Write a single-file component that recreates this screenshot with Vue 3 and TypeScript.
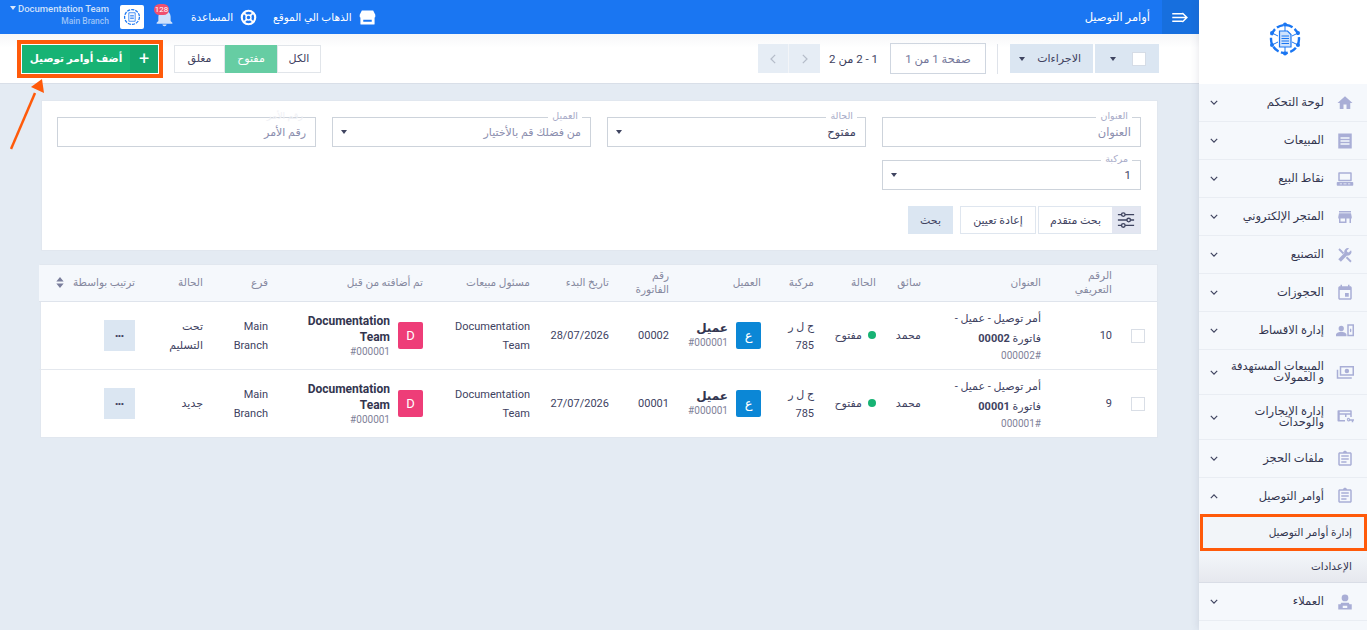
<script setup lang="ts">
interface MenuItem {
  label: string
  d: string
  s?: string
  tall?: boolean
  open?: boolean
}

const home = 'M10 20v-6h4v6h5v-8h3L12 3 2 12h3v8z'
const clip = 'M19 3h-4.2C14.4 1.8 13.3 1 12 1s-2.4.8-2.8 2H5c-1.1 0-2 .9-2 2v14c0 1.1.9 2 2 2h14c1.1 0 2-.9 2-2V5c0-1.1-.9-2-2-2zm0 16H5V5h14v14zM7 15h7v2H7zm0-4h10v2H7zm0-4h10v2H7z'

const menu: MenuItem[] = [
  { label: 'لوحة التحكم', d: home },
  { label: 'المبيعات', d: 'M3 2h18v20H3zM6 7v2h12V7zm0 4v2h12v-2zm0 4v2h12v-2z' },
  { label: 'نقاط البيع', d: 'M4 3h16c.6 0 1 .4 1 1v10c0 .6-.4 1-1 1H4c-.6 0-1-.4-1-1V4c0-.6.4-1 1-1zm1 2v8h14V5zM2 16h20c.6 0 1 .4 1 1v3c0 .6-.4 1-1 1H2c-.6 0-1-.4-1-1v-3c0-.6.4-1 1-1zm3 2v1h3v-1zm5 0v1h4v-1zm6 0v1h3v-1z' },
  { label: 'المتجر الإلكتروني', d: 'M20 4H4v2h16V4zm1 10v-2l-1-5H4l-1 5v2h1v6h10v-6h4v6h2v-6h1zm-9 4H6v-4h6v4z' },
  { label: 'التصنيع', d: 'M20 5.5l-3 3-2-.5-.5-2 3-3a5 5 0 0 0-6.300 6.300L3 17.500 6.500 21l8.200-8.200A5 5 0 0 0 20 5.500z', s: 'M4 4l4 4M7 7l3 3M14 15l6 6' },
  { label: 'الحجوزات', d: 'M17 12h-5v5h5v-5zM16 1v2H8V1H6v2H5c-1.100 0-2 .9-2 2v14c0 1.100.9 2 2 2h14c1.100 0 2-.9 2-2V5c0-1.100-.9-2-2-2h-1V1h-2zm3 18H5V8h14v11z' },
  { label: 'إدارة الاقساط', d: 'M7 5a3.500 3.500 0 1 1 0 7 3.500 3.500 0 0 1 0-7zM0 19v-2c0-2.500 4.500-4 7-4s7 1.500 7 4v2zM15 3h9v16h-9zm2 2v12h5V5zm2.500 3.500a1 2.500 0 1 1 0 5 1 2.500 0 0 1 0-5z' },
  { label: 'المبيعات المستهدفة و العمولات', tall: true, d: 'M5 4h19v13H5zm2 2v9h15V6zm7.500 1.500a3 3 0 1 1 0 6 3 3 0 0 1 0-6zM1 9h2v10h18v2H1z' },
  { label: 'إدارة الإيجارات والوحدات', tall: true, d: 'M3 3h17c.6 0 1 .4 1 1v8h-2V9h-5v3h-2V9H5v7h7v2H3c-.6 0-1-.4-1-1V4c0-.6.4-1 1-1zm2 2v2h14V5zM16.500 13a2.500 2.500 0 0 1 2.400 2H24v2h-1v2h-2v-2h-2.100a2.500 2.500 0 1 1-2.400-4zm0 1.800a.7.7 0 1 0 0 1.400.7.7 0 0 0 0-1.400z' },
  { label: 'ملفات الحجز', d: clip },
  { label: 'أوامر التوصيل', d: clip, open: true },
  { label: 'العملاء', d: 'M12 2a4.500 4.500 0 1 1 0 9 4.500 4.500 0 0 1 0-9zM7 13h10l1 2h3v7H3v-7h3zM9 17v3h6v-3z' },
]

interface Row {
  id: number
  invoice: string
  code: string
  date: string
  state: string
}

const rows: Row[] = [
  { id: 10, invoice: '00002', code: '000002', date: '28/07/2026', state: 'تحت التسليم' },
  { id: 9, invoice: '00001', code: '000001', date: '27/07/2026', state: 'جديد' },
]

const colWidths = [33, 71, 120, 45, 62, 53, 92, 60, 79, 107, 155, 65, 68, 108]
</script>

<template>
  <div class="app" dir="rtl">
    <aside class="side">
      <div class="brand">
        <svg width="34" height="34" viewBox="0 0 34 34" class="logo">
          <circle cx="17" cy="17" r="14" fill="none" stroke="#1a76f2" stroke-width="2.400" stroke-dasharray="7 2.500" />
          <g fill="#1a76f2">
            <circle cx="17" cy="2.500" r="2" /><circle cx="17" cy="31.500" r="2" />
            <circle cx="4" cy="11" r="2" /><circle cx="30" cy="11" r="2" />
            <circle cx="4" cy="23" r="2" /><circle cx="30" cy="23" r="2" />
          </g>
          <path d="M17 3v6M17 25v6M4 11l6 3M30 11l-6 3M4 23l6-3M30 23l-6-3" stroke="#1a76f2" stroke-width="1" />
          <path d="M11.500 9h8l3.500 3.500V25H11.500z" fill="#cfe2fc" stroke="#1a76f2" stroke-width="1.200" />
          <path d="M13.500 14h7.500M13.500 16.500h7.500M13.500 19h7.500M13.500 21.500h7.500" stroke="#1a76f2" stroke-width="1.100" />
        </svg>
      </div>
      <template v-for="item in menu" :key="item.label">
        <div class="item" :class="{ tall: item.tall, open: item.open }">
          <svg class="item-icon" viewBox="0 0 24 24" width="18" height="18">
            <path :d="item.d" fill="currentColor" fill-rule="evenodd" />
            <path v-if="item.s" :d="item.s" fill="none" stroke="currentColor" stroke-width="2.400" />
          </svg>
          <span class="item-label">{{ item.label }}</span>
          <svg class="chev" viewBox="0 0 10 6" width="8" height="5">
            <path :d="item.open ? 'M1 5l4-4 4 4' : 'M1 1l4 4 4-4'" fill="none" stroke="#3f4460" stroke-width="1.500" />
          </svg>
        </div>
        <div v-if="item.open" class="sub">
          <div class="sub-item marked">إدارة أوامر التوصيل</div>
          <div class="sub-item">الإعدادات</div>
        </div>
      </template>
    </aside>

    <main class="main">
      <header class="top">
        <div class="top-title">
          <span class="toggle">
            <svg viewBox="0 0 18 12" width="17" height="11">
              <path d="M0 2h11M0 6h15M0 10h11M11 1l5 5-5 5" fill="none" stroke="#fff" stroke-width="1.600" />
            </svg>
          </span>
          <span class="page-name">أوامر التوصيل</span>
        </div>
        <div class="top-actions">
          <a class="top-link">
            <svg viewBox="0 0 24 24" width="17" height="17">
              <path d="M4 2h16l3 6v3c0 .6-.4 1-1 1v9c0 .6-.4 1-1 1H3c-.6 0-1-.4-1-1v-9c-.6 0-1-.4-1-1V8zm2 13v3h12v-3z" fill="#fff" fill-rule="evenodd" />
            </svg>
            <span>الذهاب الي الموقع</span>
          </a>
          <a class="top-link">
            <svg viewBox="0 0 24 24" width="17" height="17">
              <circle cx="12" cy="12" r="9.500" fill="none" stroke="#fff" stroke-width="3" />
              <circle cx="12" cy="12" r="3.500" fill="none" stroke="#fff" stroke-width="2" />
              <path d="M5 5l4.500 4.500M19 5l-4.500 4.500M5 19l4.500-4.500M19 19l-4.500-4.500" stroke="#fff" stroke-width="2.500" />
            </svg>
            <span>المساعدة</span>
          </a>
          <span class="bell">
            <svg viewBox="0 0 24 24" width="21" height="21">
              <path d="M12 22a2.500 2.500 0 0 0 2.500-2h-5A2.500 2.500 0 0 0 12 22zm7-6v-5c0-3.300-2-6-5-6.800V3.500a2 2 0 0 0-4 0v.7C7 5 5 7.700 5 11v5l-2 2v1h18v-1z" fill="#cfe2fb" />
            </svg>
            <b class="badge">128</b>
          </span>
          <span class="mini-logo">
            <svg width="18" height="18" viewBox="0 0 34 34">
              <circle cx="17" cy="17" r="14" fill="none" stroke="#1a76f2" stroke-width="2.400" stroke-dasharray="6 2" />
              <path d="M11 9h12v16H11zM13.500 14h7M13.500 17h7M13.500 20h7" fill="none" stroke="#1a76f2" stroke-width="1.500" />
            </svg>
          </span>
          <div class="who" dir="ltr">
            <div class="who-name"><i class="caret white"></i>Documentation Team</div>
            <div class="who-branch">Main Branch</div>
          </div>
        </div>
      </header>

      <section class="toolbar">
        <div class="tool-group">
          <div class="drop check-drop">
            <span class="box"></span>
            <i class="caret"></i>
          </div>
          <div class="drop act-drop">
            <span>الاجراءات</span>
            <i class="caret"></i>
          </div>
          <span class="sep"></span>
          <div class="page-box">صفحة 1 من 1</div>
          <span class="count" dir="rtl">1 - 2 من 2</span>
          <div class="pager">
            <button type="button" class="pager-btn">
              <svg viewBox="0 0 8 12" width="7" height="10"><path d="M2 1l5 5-5 5" fill="none" stroke="#b5bcc9" stroke-width="1.500" /></svg>
            </button>
            <button type="button" class="pager-btn">
              <svg viewBox="0 0 8 12" width="7" height="10"><path d="M6 1L1 6l5 5" fill="none" stroke="#b5bcc9" stroke-width="1.500" /></svg>
            </button>
          </div>
        </div>
        <div class="tool-group">
          <div class="tabs">
            <span class="tab">الكل</span>
            <span class="tab on">مفتوح</span>
            <span class="tab">مغلق</span>
          </div>
          <button type="button" class="add">
            <span class="add-plus">+</span>
            <span class="add-text">أضف أوامر توصيل</span>
          </button>
        </div>
      </section>

      <section class="filters">
        <div class="grid">
          <div class="field">
            <label>العنوان</label>
            <span class="ph big">العنوان</span>
          </div>
          <div class="field">
            <label>الحالة</label>
            <span class="val">مفتوح</span>
            <i class="caret"></i>
          </div>
          <div class="field">
            <label>العميل</label>
            <span class="ph">من فضلك قم بالأختيار</span>
            <i class="caret"></i>
          </div>
          <div class="field">
            <label class="faint">رقم الأمر</label>
            <span class="ph">رقم الأمر</span>
          </div>
          <div class="field">
            <label>مركبة</label>
            <span class="val">1</span>
            <i class="caret"></i>
          </div>
        </div>
        <div class="filter-btns">
          <button type="button" class="adv">
            <span class="adv-icon">
              <svg viewBox="0 0 20 20" width="18" height="18">
                <path d="M1 4h18M1 10h18M1 16h18" stroke="#3f4460" stroke-width="1.600" />
                <g fill="#e3e6f1" stroke="#3f4460" stroke-width="1.500">
                  <circle cx="7" cy="4" r="2" /><circle cx="13" cy="10" r="2" /><circle cx="7" cy="16" r="2" />
                </g>
              </svg>
            </span>
            <span class="adv-text">بحث متقدم</span>
          </button>
          <button type="button" class="reset">إعادة تعيين</button>
          <button type="button" class="search">بحث</button>
        </div>
      </section>

      <section class="card">
        <table class="grid-table">
          <colgroup>
            <col v-for="(w, i) in colWidths" :key="i" :style="{ width: w + 'px' }" />
          </colgroup>
          <thead>
            <tr>
              <th></th>
              <th>الرقم التعريفي</th>
              <th>العنوان</th>
              <th>سائق</th>
              <th>الحالة</th>
              <th>مركبة</th>
              <th>العميل</th>
              <th>رقم الفاتورة</th>
              <th>تاريخ البدء</th>
              <th>مسئول مبيعات</th>
              <th>تم أضافته من قبل</th>
              <th>فرع</th>
              <th>الحالة</th>
              <th>
                ترتيب بواسطة
                <svg class="sort" viewBox="0 0 8 12" width="8" height="11"><path d="M4 0l4 5H0zM4 12L0 7h8z" fill="#7a7e9c" /></svg>
              </th>
            </tr>
          </thead>
          <tbody>
            <tr v-for="row in rows" :key="row.id">
              <td><span class="row-check"></span></td>
              <td>{{ row.id }}</td>
              <td>
                <div class="title">أمر توصيل - عميل - فاتورة <b>{{ row.invoice }}</b></div>
                <div class="code">{{ row.code }}#</div>
              </td>
              <td>محمد</td>
              <td class="nowrap"><i class="dot"></i>مفتوح</td>
              <td class="plate">ج ل ر 785</td>
              <td>
                <div class="person">
                  <span class="avatar blue">ع</span>
                  <div>
                    <div class="person-name">عميل</div>
                    <div class="code" dir="ltr">#000001</div>
                  </div>
                </div>
              </td>
              <td>{{ row.invoice }}</td>
              <td>{{ row.date }}</td>
              <td dir="ltr" class="ltr-cell">Documentation Team</td>
              <td>
                <div class="person">
                  <span class="avatar pink">D</span>
                  <div class="doc" dir="ltr">
                    <div class="person-name latin">Documentation Team</div>
                    <div class="code">#000001</div>
                  </div>
                </div>
              </td>
              <td dir="ltr" class="ltr-cell">Main Branch</td>
              <td>{{ row.state }}</td>
              <td><button type="button" class="more">•••</button></td>
            </tr>
          </tbody>
        </table>
      </section>

      <svg class="arrow" width="50" height="80" viewBox="0 0 50 80">
        <path d="M1 70L25 14" stroke="#ff5a0a" stroke-width="2.500" />
        <path d="M32 0L21 8l13 6z" fill="#ff5a0a" />
      </svg>
    </main>
  </div>
</template>

<style>
html,
body {
  margin: 0;
  background: #e4ebf3;
}
</style>

<style scoped>
.app {
  display: flex;
  width: 1367px;
  height: 630px;
  overflow: hidden;
  background: #e4ebf3;
  font-family: Roboto, "DejaVu Sans", sans-serif;
  font-size: 11.500px;
  color: #40425f;
}

.side {
  flex: 0 0 168px;
  background: #f5f8fc;
  box-shadow: 0 0 8px rgba(60, 70, 100, 0.15);
  z-index: 2;
}

.brand {
  height: 84px;
  background: #fff;
  display: flex;
  align-items: center;
  justify-content: center;
  padding-left: 3px;
  box-sizing: border-box;
}

.logo {
  margin-top: -6px;
}

.item {
  height: 38px;
  box-sizing: border-box;
  display: flex;
  align-items: center;
  padding: 0 12px 0 10px;
  gap: 12px;
  border-bottom: 1px solid #e9edf3;
}

.item.tall {
  height: 45px;
}

.item.open {
  height: 36px;
  border-bottom: none;
}

.item-icon {
  flex: 0 0 18px;
  color: #a9aed6;
  margin-right: 1px;
}

.item-label {
  flex: 1;
  font-weight: 500;
  font-size: 11.500px;
  line-height: 11px;
  color: #33354f;
}

.chev {
  flex: 0 0 8px;
  margin-left: 1px;
}

.sub {
  height: 69px;
  background: linear-gradient(#f2f5f9 60%, #e6e8ee);
  border-bottom: 1px solid #d9dde6;
  box-sizing: border-box;
}

.sub-item {
  height: 37px;
  box-sizing: border-box;
  display: flex;
  align-items: center;
  padding-right: 15px;
  font-size: 10.500px;
  font-weight: 500;
  color: #33354f;
}

.sub-item.marked {
  border: 3px solid #ff5a0a;
  width: 167px;
  padding-right: 12px;
  margin-bottom: -3px;
}

.main {
  position: relative;
  flex: 1;
  min-width: 0;
  display: flex;
  flex-direction: column;
}

.top {
  height: 34px;
  flex: none;
  background: #1a76f2;
  color: #fff;
  display: flex;
  align-items: center;
  justify-content: space-between;
  padding-left: 10px;
}

.top-title {
  display: flex;
  align-items: center;
  height: 100%;
}

.toggle {
  width: 37px;
  height: 100%;
  background: #176fde;
  display: flex;
  align-items: center;
  justify-content: center;
}

.page-name {
  margin-right: 12px;
  font-size: 11.500px;
  font-weight: 500;
}

.top-actions {
  display: flex;
  align-items: center;
}

.top-link {
  display: flex;
  align-items: center;
  gap: 7px;
  font-size: 10.500px;
  font-weight: 500;
  margin-left: 16px;
}

.bell {
  position: relative;
  margin-left: 10px;
  display: flex;
}

.badge {
  position: absolute;
  top: -3px;
  right: 6px;
  width: 15px;
  height: 11px;
  border-radius: 6px;
  background: #f0506e;
  color: #fff;
  font-size: 8px;
  font-weight: 400;
  line-height: 11px;
  text-align: center;
}

.mini-logo {
  width: 24px;
  height: 24px;
  background: #fff;
  border-radius: 2px;
  display: flex;
  align-items: center;
  justify-content: center;
  margin-left: 11px;
}

.who {
  text-align: right;
  font-weight: 500;
  line-height: 13px;
  margin-top: -4px;
}

.who-name {
  font-size: 9.500px;
  color: #cfe0fa;
}

.who-branch {
  font-size: 8.500px;
  color: #9ac2f8;
}

.caret {
  display: inline-block;
  width: 0;
  height: 0;
  border-left: 3.500px solid transparent;
  border-right: 3.500px solid transparent;
  border-top: 4px solid #3f4460;
}

.caret.white {
  border-top-color: #dbe8fb;
  margin-right: 2px;
  vertical-align: 2px;
}

.toolbar {
  height: 50px;
  flex: none;
  box-sizing: border-box;
  background: linear-gradient(#f6f7f8, #fff 14px);
  border-bottom: 1px solid #d9dfe8;
  display: flex;
  align-items: center;
  justify-content: space-between;
  padding: 0 40px 0 22px;
}

.tool-group {
  display: flex;
  align-items: center;
}

.drop {
  height: 29px;
  background: #dbe6f2;
  display: flex;
  align-items: center;
  box-sizing: border-box;
}

.check-drop {
  width: 64px;
  padding: 0 13px 0 0;
  gap: 16px;
  margin-left: 2px;
}

.box {
  width: 12px;
  height: 12px;
  background: #fff;
  border: 1px solid #d5dce6;
}

.act-drop {
  width: 83px;
  padding: 0 12px 0 0;
  justify-content: space-between;
  padding-left: 9px;
  font-size: 11px;
}

.sep {
  width: 1px;
  height: 30px;
  background: #dfe3ea;
  margin: 0 12px 0 11px;
}

.page-box {
  width: 96px;
  height: 31px;
  box-sizing: border-box;
  border: 1px solid #cfd6e0;
  display: flex;
  align-items: center;
  justify-content: center;
  color: #74779a;
  font-size: 11.500px;
}

.count {
  margin: 0 12px;
  font-size: 11.500px;
  width: 46px;
  white-space: nowrap;
}

.pager {
  display: flex;
}

.pager-btn {
  width: 31px;
  height: 29px;
  border: none;
  padding: 0;
  background: #e6edf5;
  margin-left: 0;
  display: flex;
  align-items: center;
  justify-content: center;
}

.pager-btn + .pager-btn {
  border-right: 1px solid #f3f5f8;
}

.tabs {
  display: flex;
  margin-left: 16px;
}

.tab {
  height: 28px;
  box-sizing: border-box;
  border: 1px solid #e1e5ea;
  background: #fff;
  display: flex;
  align-items: center;
  justify-content: center;
  font-size: 11px;
  font-weight: 500;
  width: 44px;
}

.tab.on {
  width: 52px;
  background: #66cda3;
  border-color: #66cda3;
  color: #fff;
}

.tab:last-child {
  width: 51px;
}

.add {
  width: 136px;
  height: 28px;
  border: none;
  padding: 0;
  display: flex;
  background: #17b374;
  color: #fff;
  font-family: inherit;
  outline: 4px solid #ff5a0a;
  outline-offset: 1px;
}

.add-plus {
  width: 28px;
  height: 100%;
  background: #14a56c;
  font-size: 18px;
  line-height: 27px;
}

.add-text {
  flex: 1;
  line-height: 27px;
  font-size: 10.500px;
  font-weight: 700;
  text-align: center;
}

.filters {
  margin: 16px 41px 13px 41px;
  height: 151px;
  box-sizing: border-box;
  background: #fff;
  border: 1px solid #e1e7ef;
  padding: 16px;
  display: flex;
  flex-direction: column;
}

.grid {
  display: grid;
  grid-template-columns: repeat(4, 259px);
  column-gap: 16px;
  row-gap: 13px;
}

.field {
  position: relative;
  height: 30px;
  box-sizing: border-box;
  border: 1px solid #cdd3db;
  display: flex;
  align-items: center;
  justify-content: space-between;
  padding: 0 9px 0 8px;
}

.field label {
  position: absolute;
  top: -8px;
  right: 8px;
  padding: 0 4px;
  background: #fff;
  font-size: 9.500px;
  line-height: 12px;
  color: #a8abc8;
}

.field label.faint {
  background: none;
  color: #f0f1f5;
}

.ph {
  color: #8b8eae;
  font-size: 11px;
}

.ph.big {
  font-size: 11.500px;
  margin-top: -1px;
}

.val {
  font-size: 11.500px;
}

.filter-btns {
  margin-top: 16px;
  display: flex;
  height: 29px;
}

.filter-btns button {
  font-family: inherit;
  font-size: 11px;
  color: #40425f;
  background: #fff;
  padding: 0;
  border: 1px solid #dfe6ef;
  border-radius: 0;
}

.adv {
  width: 103px;
  display: flex;
  align-items: stretch;
  margin-left: 2px;
}

.adv-icon {
  width: 28px;
  background: #e3e6f1;
  display: flex;
  align-items: center;
  justify-content: center;
}

.adv-text {
  flex: 1;
  align-self: center;
}

.filter-btns .reset {
  width: 76px;
  margin-left: 7px;
}

.filter-btns .search {
  width: 45px;
  background: #dbe6f2;
  border-color: #dbe6f2;
}

.card {
  margin: 0 41px 0 41px;
  background: #fff;
  border: 1px solid #e1e7ef;
  width: 1118px;
  box-sizing: border-box;
}

.grid-table {
  width: 1116px;
  table-layout: fixed;
  border-collapse: collapse;
}

.grid-table th {
  height: 36px;
  padding: 0 12px 0 0;
  background: #f5f8fc;
  border-bottom: 1px solid #dfe4ec;
  text-align: right;
  font-weight: 400;
  font-size: 10.500px;
  line-height: 14px;
  color: #85889f;
}

.grid-table td {
  height: 67px;
  padding: 0 12px 0 0;
  border-bottom: 1px solid #e4e8ee;
  text-align: right;
  font-size: 11px;
  line-height: 19px;
}

.grid-table tr:last-child td {
  border-bottom: none;
}

.grid-table td.ltr-cell {
  text-align: right;
  padding: 0 12px 0 0;
}

.nowrap {
  white-space: nowrap;
}

.sort {
  margin-right: 6px;
  vertical-align: -2px;
}

.row-check {
  display: block;
  width: 12px;
  height: 12px;
  border: 1px solid #d9dee6;
  background: #fff;
}

.title {
  line-height: 20px;
}

.title b {
  font-weight: 700;
}

.code {
  font-size: 10px;
  line-height: 14px;
  color: #7f8299;
}

.dot {
  display: inline-block;
  width: 8px;
  height: 8px;
  border-radius: 50%;
  background: #17b374;
  margin-left: 6px;
}

.person {
  display: flex;
  align-items: center;
  gap: 8px;
}

.avatar {
  flex: 0 0 25px;
  width: 25px;
  height: 27px;
  border-radius: 2px;
  color: #fff;
  display: flex;
  align-items: center;
  justify-content: center;
  font-size: 13px;
}

.avatar.blue {
  background: #0b87d6;
}

.avatar.pink {
  background: #ee3d78;
}

.person-name {
  font-size: 12px;
  font-weight: 700;
  line-height: 15px;
  color: #33354f;
}

.doc {
  text-align: right;
  line-height: 16px;
}

.latin {
  line-height: 16px;
}

.more {
  width: 31px;
  height: 31px;
  border: none;
  padding: 0;
  background: #dbe6f2;
  color: #40425f;
  font-size: 8px;
  letter-spacing: 0;
}

.arrow {
  position: absolute;
  left: 10px;
  top: 79px;
  pointer-events: none;
}
</style>
